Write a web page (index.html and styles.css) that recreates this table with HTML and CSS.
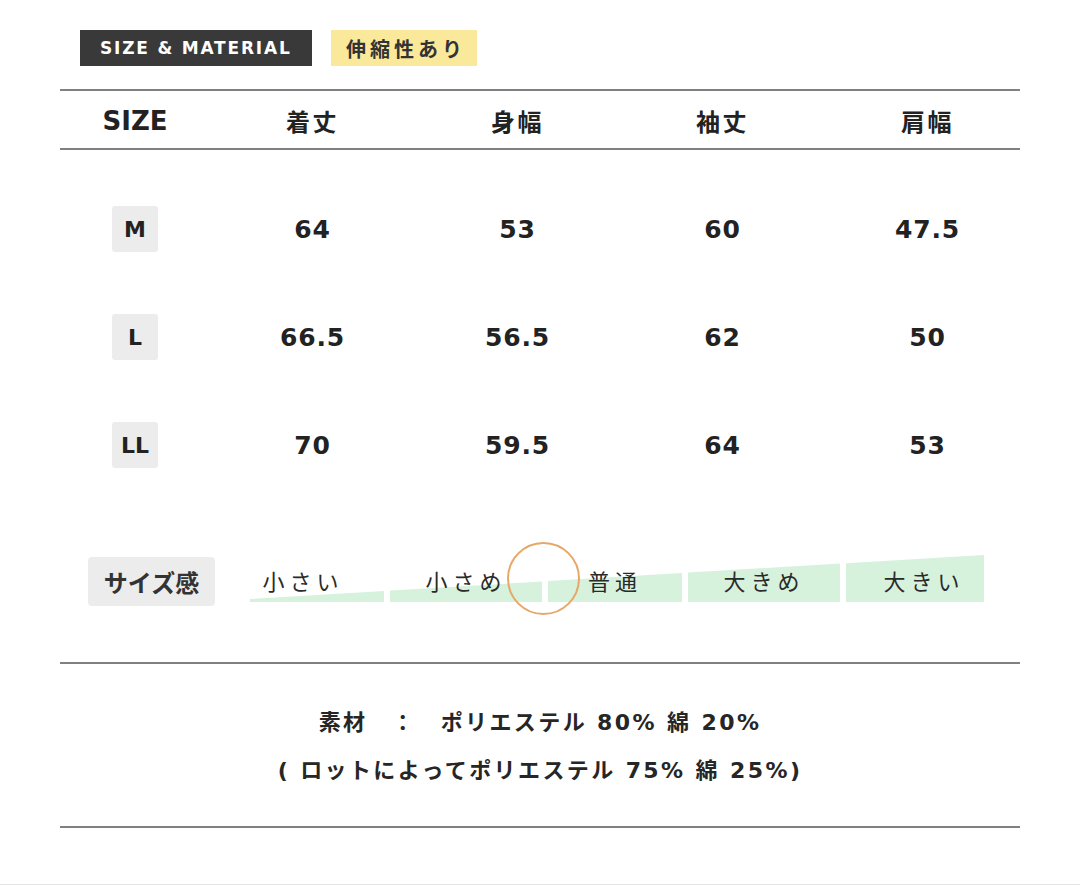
FILE: index.html
```html
<!DOCTYPE html>
<html lang="ja">
<head>
<meta charset="utf-8">
<title>SIZE &amp; MATERIAL</title>
<link rel="stylesheet" href="styles.css">
</head>
<body>
<div class="page">
  <div class="tags">
    <span class="tag tag-dark">SIZE &amp; MATERIAL</span>
    <span class="tag tag-yellow">伸縮性あり</span>
  </div>

  <div class="rule"></div>
  <div class="grid head">
    <div class="cell">SIZE</div>
    <div class="cell jp">着丈</div>
    <div class="cell jp">身幅</div>
    <div class="cell jp">袖丈</div>
    <div class="cell jp">肩幅</div>
  </div>
  <div class="rule"></div>

  <div class="body">
    <div class="grid row">
      <div class="cell"><span class="size">M</span></div>
      <div class="cell">64</div>
      <div class="cell">53</div>
      <div class="cell">60</div>
      <div class="cell">47.5</div>
    </div>
    <div class="grid row">
      <div class="cell"><span class="size">L</span></div>
      <div class="cell">66.5</div>
      <div class="cell">56.5</div>
      <div class="cell">62</div>
      <div class="cell">50</div>
    </div>
    <div class="grid row">
      <div class="cell"><span class="size">LL</span></div>
      <div class="cell">70</div>
      <div class="cell">59.5</div>
      <div class="cell">64</div>
      <div class="cell">53</div>
    </div>
  </div>

  <div class="fit">
    <div class="fit-label">サイズ感</div>
    <div class="scale">
      <div class="seg s1"><span>小さい</span></div>
      <div class="seg s2"><span>小さめ</span></div>
      <div class="seg s3"><span>普通</span></div>
      <div class="seg s4"><span>大きめ</span></div>
      <div class="seg s5"><span>大きい</span></div>
      <div class="marker"></div>
    </div>
  </div>

  <div class="rule"></div>
  <div class="material">
    <p>素材　：　ポリエステル 80% 綿 20%</p>
    <p>( ロットによってポリエステル 75% 綿 25%)</p>
  </div>
  <div class="rule"></div>
</div>
<div class="footer-line"></div>
</body>
</html>
```

FILE: styles.css
```css
html, body {
  margin: 0;
  padding: 0;
  background: #ffffff;
}

body {
  font-family: "DejaVu Sans", "Noto Sans CJK JP", sans-serif;
  color: #222222;
}

.page {
  width: 960px;
  margin-left: 60px;
  padding-top: 30px;
}

.tags {
  display: flex;
  gap: 19px;
  margin-left: 20px;
  height: 36px;
}

.tag {
  display: flex;
  align-items: center;
  height: 36px;
  box-sizing: border-box;
}

.tag-dark {
  background: #393939;
  color: #ffffff;
  font-weight: bold;
  font-size: 17px;
  letter-spacing: 1.8px;
  width: 232px;
  padding-left: 20px;
}

.tag-yellow {
  background: #fbe99b;
  color: #333333;
  font-family: "Noto Sans CJK JP", sans-serif;
  font-weight: bold;
  font-size: 20px;
  letter-spacing: 4px;
  width: 146px;
  justify-content: center;
  padding-left: 4px;
}

.rule {
  height: 2px;
  background: #808080;
  width: 960px;
}

.tags + .rule {
  margin-top: 23px;
}

.grid {
  display: grid;
  grid-template-columns: 150px 205px 205px 205px 205px;
  width: 970px;
}

.cell {
  display: flex;
  align-items: center;
  justify-content: center;
}

.head {
  height: 57px;
  font-weight: bold;
  font-size: 26px;
  padding-top: 2px;
  box-sizing: border-box;
}

.head .jp {
  font-family: "Noto Sans CJK JP", sans-serif;
  font-size: 24px;
  letter-spacing: 2.5px;
}

.body {
  padding-top: 25px;
}

.row {
  height: 108px;
  font-weight: bold;
  font-size: 25px;
  letter-spacing: 0.8px;
}

.size {
  display: flex;
  align-items: center;
  justify-content: center;
  width: 46px;
  height: 46px;
  background: #ececec;
  border-radius: 3px;
  font-size: 22px;
  letter-spacing: 0;
}

.fit {
  display: flex;
  align-items: flex-start;
  margin-top: 56px;
  height: 107px;
}

.fit-label {
  margin-left: 28px;
  margin-top: 2px;
  width: 127px;
  height: 49px;
  background: #ececec;
  border-radius: 4px;
  display: flex;
  align-items: center;
  justify-content: center;
  font-family: "Noto Sans CJK JP", sans-serif;
  font-weight: bold;
  font-size: 24px;
  color: #333333;
}

.scale {
  position: relative;
  display: flex;
  gap: 6px;
  margin-left: 35px;
  height: 47px;
}

.seg {
  position: relative;
  height: 47px;
  display: flex;
  align-items: center;
  justify-content: center;
  padding-top: 2px;
  box-sizing: border-box;
  font-family: "Noto Sans CJK JP", sans-serif;
  font-size: 22px;
  letter-spacing: 5px;
  color: #2a2a2a;
}

.seg::before {
  content: "";
  position: absolute;
  inset: 0;
  background: #d6f2dc;
}

.seg span {
  position: relative;
}

.s1 { width: 134px; padding-right: 28px; }
.s2 { width: 152px; }
.s3 { width: 134px; }
.s4 { width: 152px; }
.s5 { width: 138px; padding-left: 18px; }

.s1::before { clip-path: polygon(0 93.6%, 100% 76.6%, 100% 100%, 0 100%); }
.s2::before { clip-path: polygon(0 75.7%, 100% 56.4%, 100% 100%, 0 100%); }
.s3::before { clip-path: polygon(0 55.5%, 100% 38.3%, 100% 100%, 0 100%); }
.s4::before { clip-path: polygon(0 37.4%, 100% 18.3%, 100% 100%, 0 100%); }
.s5::before { clip-path: polygon(0 17.4%, 100% 0, 100% 100%, 0 100%); }

.marker {
  position: absolute;
  left: 257px;
  top: -13px;
  width: 73px;
  height: 73px;
  box-sizing: border-box;
  border: 2px solid #e6a868;
  border-radius: 50%;
}

.material {
  padding-top: 35px;
  padding-bottom: 31px;
  text-align: center;
  font-weight: bold;
  font-size: 22px;
  letter-spacing: 2.4px;
  color: #262626;
}

.material p {
  margin: 0;
  line-height: 48px;
}

.footer-line {
  margin-top: 56px;
  height: 1px;
  background: #e4e4e4;
}
```
